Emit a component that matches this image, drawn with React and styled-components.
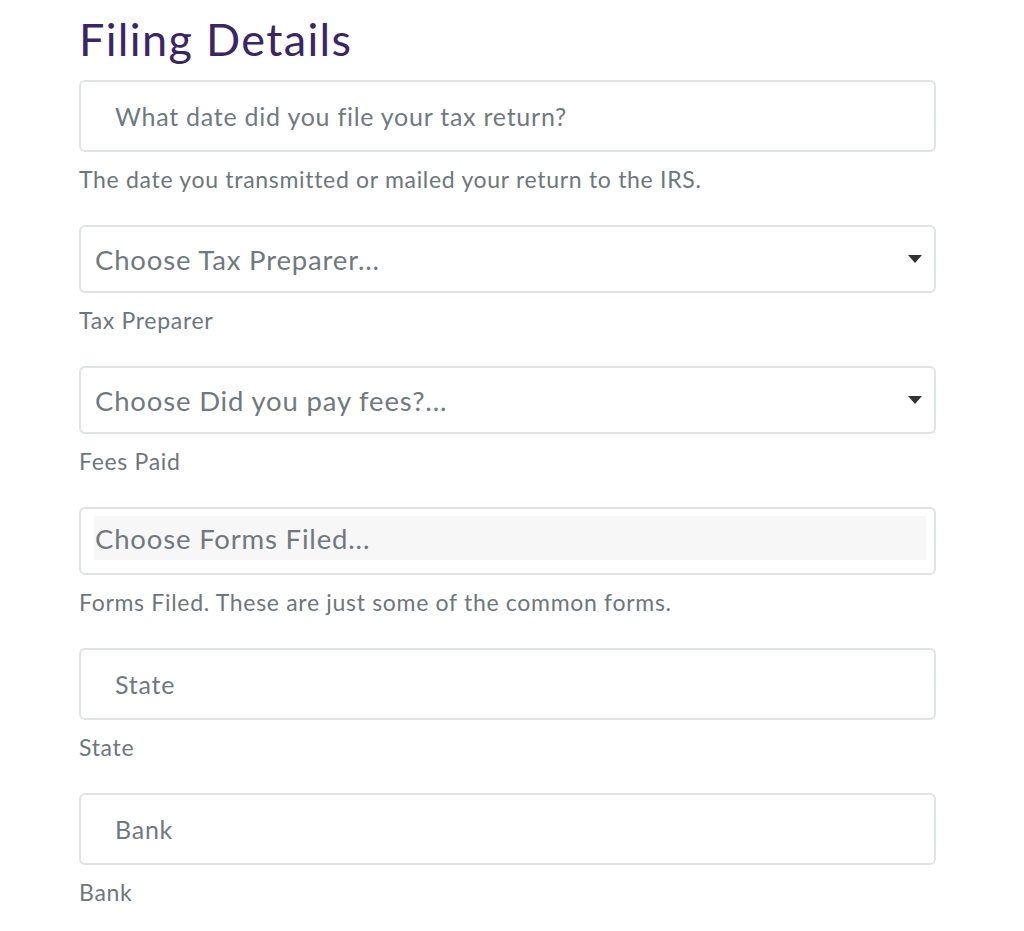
import React from "react";
import styled, { createGlobalStyle } from "styled-components";

const GlobalStyle = createGlobalStyle`
  body {
    margin: 0;
    background: #ffffff;
    font-family: Lato, "Noto Sans", sans-serif;
  }
`;

const Page = styled.div`
  width: 857px;
  padding: 12px 0 0 79px;
`;

const Title = styled.h1`
  margin: 0 0 14px;
  font-size: 45px;
  line-height: 54px;
  font-weight: 400;
  letter-spacing: 0.03em;
  color: #3b2566;
`;

const Field = styled.div`
  display: flex;
  flex-direction: column;
  margin-bottom: 31px;
`;

const pad = { input: "0 34px", select: "0 12px 0 14px", multi: "0 8px 0 13px" };

const Box = styled.div`
  box-sizing: border-box;
  display: flex;
  align-items: center;
  height: ${(p) => (p.$kind === "input" ? 72 : 68)}px;
  padding: ${(p) => pad[p.$kind]};
  border: 2px solid #dfe3e6;
  border-radius: 6px;
  font-size: ${(p) => (p.$kind === "input" ? 25 : 27.5)}px;
  letter-spacing: 0.03em;
  color: #6f7a80;
`;

const Value = styled.span`
  flex: 1;
`;

const Chip = styled.span`
  flex: 1;
  display: flex;
  align-items: center;
  height: 44px;
  margin-bottom: 6px;
  padding-left: 1px;
  background: #f7f7f7;
`;

const Caret = styled.svg`
  width: 14px;
  height: 8px;
`;

const Help = styled.p`
  margin: 12px 0 0;
  font-size: 23px;
  line-height: 30px;
  letter-spacing: 0.03em;
  color: #6c777d;
`;

const fields = [
  { kind: "input", value: "What date did you file your tax return?", help: "The date you transmitted or mailed your return to the IRS." },
  { kind: "select", value: "Choose Tax Preparer...", help: "Tax Preparer" },
  { kind: "select", value: "Choose Did you pay fees?...", help: "Fees Paid" },
  { kind: "multi", value: "Choose Forms Filed...", help: "Forms Filed. These are just some of the common forms." },
  { kind: "input", value: "State", help: "State" },
  { kind: "input", value: "Bank", help: "Bank" },
];

export default function App() {
  return (
    <>
      <GlobalStyle />
      <Page>
        <Title>Filing Details</Title>
        {fields.map((f) => (
          <Field key={f.help}>
            <Box $kind={f.kind}>
              {f.kind === "multi" ? (
                <Chip>{f.value}</Chip>
              ) : (
                <Value>{f.value}</Value>
              )}
              {f.kind === "select" && (
                <Caret viewBox="0 0 14 8">
                  <path d="M0 0h14L7 8z" fill="#333" />
                </Caret>
              )}
            </Box>
            <Help>{f.help}</Help>
          </Field>
        ))}
      </Page>
    </>
  );
}
